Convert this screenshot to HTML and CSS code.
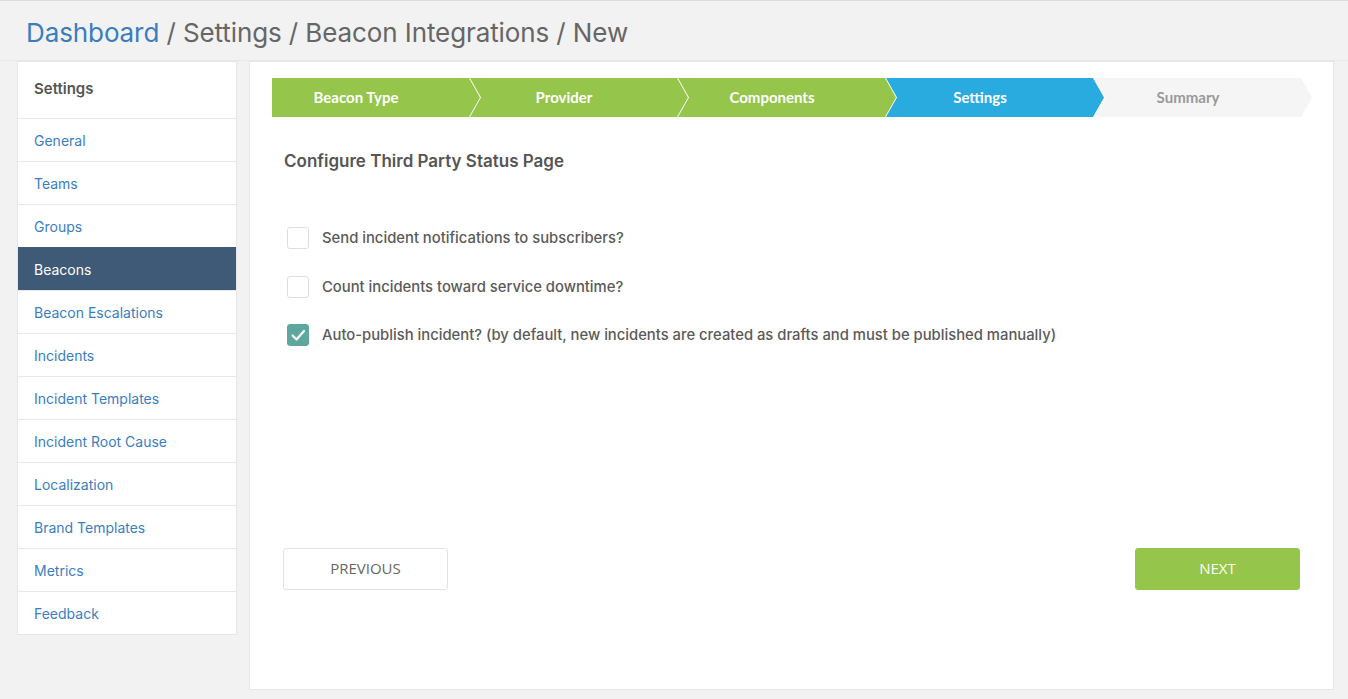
FILE: index.html
```html
<!DOCTYPE html>
<html lang="en">
<head>
<meta charset="utf-8">
<title>Beacon Integrations - New</title>
<link rel="stylesheet" href="styles.css">
</head>
<body>
<header class="topbar">
  <h1 class="crumbs"><a class="crumb-link" href="#">Dashboard</a> / Settings / Beacon Integrations / New</h1>
</header>
<div class="layout">
  <aside class="sidebar">
    <div class="sidebar-head">Settings</div>
    <nav class="nav">
      <a class="nav-item" href="#">General</a>
      <a class="nav-item" href="#">Teams</a>
      <a class="nav-item" href="#">Groups</a>
      <a class="nav-item active" href="#">Beacons</a>
      <a class="nav-item" href="#">Beacon Escalations</a>
      <a class="nav-item" href="#">Incidents</a>
      <a class="nav-item" href="#">Incident Templates</a>
      <a class="nav-item" href="#">Incident Root Cause</a>
      <a class="nav-item" href="#">Localization</a>
      <a class="nav-item" href="#">Brand Templates</a>
      <a class="nav-item" href="#">Metrics</a>
      <a class="nav-item" href="#">Feedback</a>
    </nav>
  </aside>
  <main class="panel">
    <ol class="steps">
      <li class="step step-first done">Beacon Type</li>
      <li class="step done">Provider</li>
      <li class="step done">Components</li>
      <li class="step current">Settings</li>
      <li class="step todo">Summary</li>
    </ol>
    <h2 class="form-title">Configure Third Party Status Page</h2>
    <div class="options">
      <label class="option">
        <span class="box"></span>
        <span class="option-text">Send incident notifications to subscribers?</span>
      </label>
      <label class="option">
        <span class="box"></span>
        <span class="option-text">Count incidents toward service downtime?</span>
      </label>
      <label class="option">
        <span class="box checked"><svg viewBox="0 0 22 22" width="22" height="22"><path d="M5.5 11.5 L9.5 15.5 L17 7" fill="none" stroke="#fff" stroke-width="2.2" stroke-linecap="round" stroke-linejoin="round"/></svg></span>
        <span class="option-text">Auto-publish incident? (by default, new incidents are created as drafts and must be published manually)</span>
      </label>
    </div>
    <div class="actions">
      <button class="btn btn-prev" type="button">PREVIOUS</button>
      <button class="btn btn-next" type="button">NEXT</button>
    </div>
  </main>
</div>
</body>
</html>
```
FILE: styles.css
```css
* { box-sizing: border-box; }

body {
  margin: 0;
  background: #f2f2f2;
  font-family: "Inter", "Lato", sans-serif;
  color: #555;
}

.topbar {
  height: 61px;
  border-top: 1px solid #dcdcdc;
  border-bottom: 1px solid #e8e8e8;
  background: #f2f2f2;
  padding-left: 26px;
  padding-top: 4px;
  display: flex;
  align-items: center;
}

.crumbs {
  margin: 0;
  font-size: 26px;
  letter-spacing: -0.1px;
  font-weight: 400;
  color: #666;
  line-height: 1;
}

.crumb-link {
  color: #3a7dbf;
  text-decoration: none;
}

.layout {
  display: flex;
  align-items: flex-start;
  gap: 12px;
  padding: 0 14px 9px 17px;
}

.sidebar {
  width: 220px;
  flex: none;
  background: #fff;
  border: 1px solid #e6e6e6;
}

.sidebar-head {
  height: 56px;
  padding-left: 16px;
  display: flex;
  align-items: center;
  font-size: 15px;
  font-weight: 600;
  color: #555;
  padding-bottom: 4px;
}

.nav { display: flex; flex-direction: column; }

.nav-item {
  height: 43px;
  border-top: 1px solid #e8e8e8;
  padding-left: 16px;
  display: flex;
  align-items: center;
  font-size: 14px;
  color: #3b7ec0;
  text-decoration: none;
}

.nav-item.active {
  background: #3e5a76;
  color: #fff;
  border-top-color: #3e5a76;
}

.panel {
  flex: 1;
  min-width: 0;
  height: 629px;
  background: #fff;
  border: 1px solid #e6e6e6;
  padding: 16px 22px;
}

.steps {
  list-style: none;
  margin: 0;
  padding: 0;
  display: flex;
  height: 39px;
}

.step {
  width: 218px;
  flex: none;
  margin-left: -10px;
  padding-right: 30px;
  padding-bottom: 1px;
  display: flex;
  align-items: center;
  justify-content: center;
  font-family: "Lato", sans-serif;
  font-size: 15px;
  font-weight: 700;
  color: #fff;
  clip-path: polygon(0 0, calc(100% - 11px) 0, 100% 50%, calc(100% - 11px) 100%, 0 100%, 11px 50%);
}

.step-first {
  width: 208px;
  margin-left: 0;
  padding-right: 40px;
  clip-path: polygon(0 0, calc(100% - 11px) 0, 100% 50%, calc(100% - 11px) 100%, 0 100%);
}

.step.done { background: #95c54b; }
.step.current { background: #2aabe0; }
.step.todo { background: #f5f5f5; color: #999; }

.form-title {
  margin: 34px 0 0 12px;
  font-size: 17px;
  font-weight: 600;
  color: #555;
  line-height: 20px;
}

.options {
  margin-top: 56px;
  padding-left: 15px;
  display: flex;
  flex-direction: column;
  gap: 26.5px;
}

.option {
  display: flex;
  align-items: center;
  gap: 13px;
  height: 22px;
}

.box {
  width: 22px;
  height: 22px;
  flex: none;
  border: 1px solid #dedede;
  border-radius: 3px;
  background: #fff;
  display: flex;
}

.box.checked {
  background: #5ea79f;
  border-color: #5ea79f;
}

.box.checked svg { margin: -1px; }

.option-text {
  font-size: 14.8px;
  font-weight: 500;
  color: #5a5a5a;
}

.actions {
  margin-top: 202px;
  padding: 0 11px;
  display: flex;
  justify-content: space-between;
}

.btn {
  width: 165px;
  height: 42px;
  padding: 0 0 3px;
  border-radius: 3px;
  font-family: "Open Sans", sans-serif;
  font-size: 15px;
  cursor: pointer;
}

.btn-prev {
  background: #fff;
  border: 1px solid #e2e2e2;
  color: #666;
}

.btn-next {
  background: #95c54b;
  border: 1px solid #95c54b;
  color: #fff;
}
```
